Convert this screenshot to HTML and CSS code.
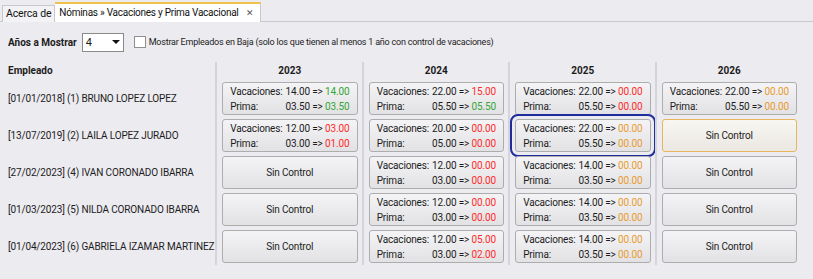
FILE: index.html
```html
<!DOCTYPE html>
<html lang="es">
<head>
<meta charset="utf-8">
<title>Nóminas » Vacaciones y Prima Vacacional</title>
<link rel="stylesheet" href="styles.css">
</head>
<body>
<div class="tabs">
  <div class="tab">Acerca de</div>
  <div class="tab active">Nóminas » Vacaciones y Prima Vacacional <span class="close">✕</span></div>
</div>
<div class="toolbar">
  <span class="lbl-bold">Años a Mostrar</span>
  <div class="select"><span>4</span><span class="caret"></span></div>
  <span class="check"></span>
  <span class="check-lbl">Mostrar Empleados en Baja (solo los que tienen al menos 1 año con control de vacaciones)</span>
</div>
<div class="grid">
  <div class="col names">
    <div class="head">Empleado</div>
    <div class="cell">[01/01/2018] (1) BRUNO LOPEZ LOPEZ</div>
    <div class="cell">[13/07/2019] (2) LAILA LOPEZ JURADO</div>
    <div class="cell">[27/02/2023] (4) IVAN CORONADO IBARRA</div>
    <div class="cell">[01/03/2023] (5) NILDA CORONADO IBARRA</div>
    <div class="cell">[01/04/2023] (6) GABRIELA IZAMAR MARTINEZ</div>
  </div>
  <div class="col year">
    <div class="head c">2023</div>
    <div class="btn"><span>Vacaciones:</span><span class="v">14.00 =&gt; <i class="g">14.00</i></span><span>Prima:</span><span class="v">03.50 =&gt; <i class="g">03.50</i></span></div>
    <div class="btn"><span>Vacaciones:</span><span class="v">12.00 =&gt; <i class="r">03.00</i></span><span>Prima:</span><span class="v">03.00 =&gt; <i class="r">01.00</i></span></div>
    <div class="btn sc">Sin Control</div>
    <div class="btn sc">Sin Control</div>
    <div class="btn sc">Sin Control</div>
  </div>
  <div class="col year">
    <div class="head c">2024</div>
    <div class="btn"><span>Vacaciones:</span><span class="v">22.00 =&gt; <i class="r">15.00</i></span><span>Prima:</span><span class="v">05.50 =&gt; <i class="g">05.50</i></span></div>
    <div class="btn"><span>Vacaciones:</span><span class="v">20.00 =&gt; <i class="r">00.00</i></span><span>Prima:</span><span class="v">05.00 =&gt; <i class="r">00.00</i></span></div>
    <div class="btn"><span>Vacaciones:</span><span class="v">12.00 =&gt; <i class="r">00.00</i></span><span>Prima:</span><span class="v">03.00 =&gt; <i class="r">00.00</i></span></div>
    <div class="btn"><span>Vacaciones:</span><span class="v">12.00 =&gt; <i class="r">00.00</i></span><span>Prima:</span><span class="v">03.00 =&gt; <i class="r">00.00</i></span></div>
    <div class="btn"><span>Vacaciones:</span><span class="v">12.00 =&gt; <i class="r">05.00</i></span><span>Prima:</span><span class="v">03.00 =&gt; <i class="r">02.00</i></span></div>
  </div>
  <div class="col year">
    <div class="head c">2025</div>
    <div class="btn"><span>Vacaciones:</span><span class="v">22.00 =&gt; <i class="r">00.00</i></span><span>Prima:</span><span class="v">05.50 =&gt; <i class="r">00.00</i></span></div>
    <div class="btn focus"><span>Vacaciones:</span><span class="v">22.00 =&gt; <i class="o">00.00</i></span><span>Prima:</span><span class="v">05.50 =&gt; <i class="o">00.00</i></span></div>
    <div class="btn"><span>Vacaciones:</span><span class="v">14.00 =&gt; <i class="o">00.00</i></span><span>Prima:</span><span class="v">03.50 =&gt; <i class="o">00.00</i></span></div>
    <div class="btn"><span>Vacaciones:</span><span class="v">14.00 =&gt; <i class="o">00.00</i></span><span>Prima:</span><span class="v">03.50 =&gt; <i class="o">00.00</i></span></div>
    <div class="btn"><span>Vacaciones:</span><span class="v">14.00 =&gt; <i class="o">00.00</i></span><span>Prima:</span><span class="v">03.50 =&gt; <i class="o">00.00</i></span></div>
  </div>
  <div class="col year">
    <div class="head c">2026</div>
    <div class="btn"><span>Vacaciones:</span><span class="v">22.00 =&gt; <i class="o">00.00</i></span><span>Prima:</span><span class="v">05.50 =&gt; <i class="o">00.00</i></span></div>
    <div class="btn sc hot">Sin Control</div>
    <div class="btn sc">Sin Control</div>
    <div class="btn sc">Sin Control</div>
    <div class="btn sc">Sin Control</div>
  </div>
</div>
</body>
</html>
```
FILE: styles.css
```css
html, body {
  margin: 0;
  padding: 0;
  background: #ecebf0;
  font-family: "Roboto", "Noto Sans", sans-serif;
  font-size: 10px;
  letter-spacing: -0.15px;
  color: #1c1c1c;
}
.tabs {
  display: flex;
  align-items: flex-end;
  height: 21px;
  padding-left: 2px;
  border-bottom: 1px solid #c9c9cc;
  white-space: nowrap;
}
.tab {
  height: 16px;
  line-height: 16px;
  padding: 0 3px;
  background: #f3f3f5;
  border: 1px solid #c9c9cc;
  border-bottom: none;
  margin-bottom: -1px;
  font-size: 10.5px;
  color: #111;
}
.tab.active {
  height: 17px;
  line-height: 17px;
  background: #fff;
  border-top: 2px solid #f0c24c;
  border-left: none;
  padding: 0 6px 1px 4px;
  font-size: 10px;
  letter-spacing: -0.25px;
}
.close {
  margin-left: 5px;
  font-size: 9px;
  color: #555;
}
.toolbar {
  display: flex;
  align-items: center;
  height: 20px;
  margin-top: 10px;
  padding-left: 8px;
  white-space: nowrap;
}
.lbl-bold {
  font-weight: bold;
  letter-spacing: 0;
}
.select {
  display: flex;
  align-items: center;
  justify-content: space-between;
  box-sizing: border-box;
  width: 42px;
  height: 19px;
  margin-left: 5px;
  padding: 0 3px 0 3px;
  background: #fff;
  border: 1px solid #8a8a8a;
  font-size: 11px;
}
.caret {
  width: 0;
  height: 0;
  border-left: 4px solid transparent;
  border-right: 4px solid transparent;
  border-top: 4px solid #111;
}
.check {
  box-sizing: border-box;
  width: 12px;
  height: 12px;
  margin-left: 10px;
  background: #fff;
  border: 1px solid #8f8f8f;
}
.check-lbl {
  margin-left: 3px;
  font-size: 9px;
  letter-spacing: -0.22px;
}
.grid {
  display: flex;
  margin-top: 10px;
  padding-left: 8px;
  white-space: nowrap;
}
.col {
  display: flex;
  flex-direction: column;
  gap: 4px;
  padding-bottom: 2px;
}
.names {
  width: 207px;
}
.year {
  width: 146.5px;
  box-sizing: border-box;
  border-left: 2px solid #d5d4da;
  padding-left: 5px;
  padding-right: 4px;
}
.head {
  height: 14px;
  line-height: 14px;
  margin-top: 2px;
  font-weight: bold;
  letter-spacing: 0;
}
.head.c {
  text-align: center;
}
.cell {
  height: 33px;
  display: flex;
  align-items: center;
}
.btn {
  box-sizing: border-box;
  height: 33px;
  border: 1px solid #adadad;
  border-radius: 3px;
  background: linear-gradient(#f4f4f6, #e2e2e4);
  display: grid;
  grid-template-columns: auto auto;
  justify-content: center;
  align-content: center;
  column-gap: 3px;
  line-height: 15px;
}
.btn .v {
  text-align: right;
}
.btn.sc {
  display: flex;
  align-items: center;
  justify-content: center;
}
.btn.hot {
  border-color: #e8b55c;
  background: linear-gradient(#f8f6f2, #ebe8e2);
}
.btn.focus {
  outline: 2px solid #1f2c9e;
  outline-offset: 3px;
  border-radius: 3px;
}
i {
  font-style: normal;
}
.g { color: #34a534; }
.r { color: #ff2a2a; }
.o { color: #e89b30; }
```
